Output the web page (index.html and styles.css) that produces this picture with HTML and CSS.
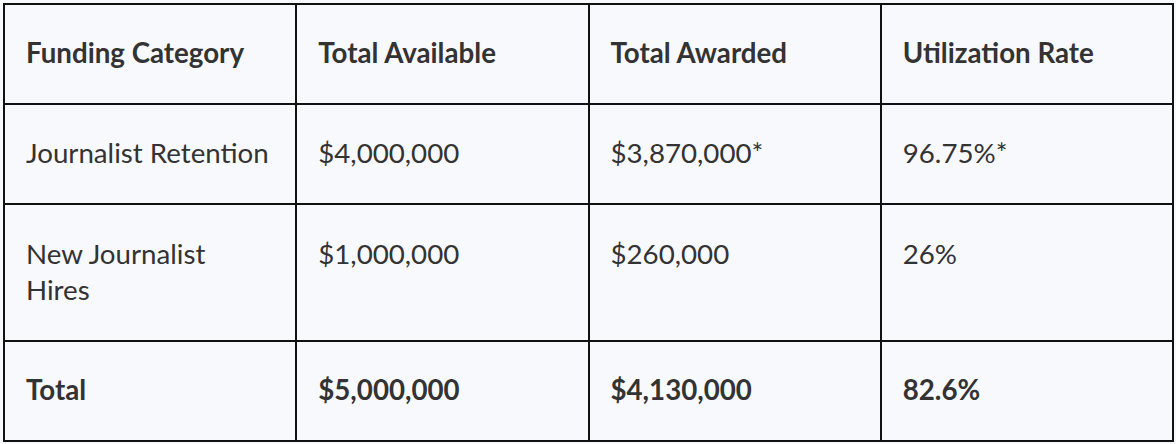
FILE: index.html
```html
<!DOCTYPE html>
<html>
<head>
<meta charset="utf-8">
<link rel="stylesheet" href="styles.css">
</head>
<body>
<div class="wrap">
<table class="funding">
<thead>
<tr><th>Funding Category</th><th>Total Available</th><th>Total Awarded</th><th>Utilization Rate</th></tr>
</thead>
<tbody>
<tr><td>Journalist Retention</td><td>$4,000,000</td><td>$3,870,000*</td><td>96.75%*</td></tr>
<tr class="tall"><td>New Journalist Hires</td><td>$1,000,000</td><td>$260,000</td><td>26%</td></tr>
<tr class="total"><td>Total</td><td>$5,000,000</td><td>$4,130,000</td><td>82.6%</td></tr>
</tbody>
</table>
</div>
</body>
</html>
```

FILE: styles.css
```css
html, body {
  margin: 0;
  padding: 0;
  background: #f8f9fd;
}
.wrap {
  padding: 3px 0 0 3px;
}
.funding {
  width: 1171px;
  border-collapse: collapse;
  table-layout: fixed;
  font-family: Lato, "Noto Sans", sans-serif;
  font-size: 27.7px;
  line-height: 36px;
  color: #333;
}
.funding th, .funding td {
  border: 2px solid #111;
  padding: 30px 22px 32px 21px;
  text-align: left;
  vertical-align: top;
}
.funding th {
  font-weight: 700;
}
.funding .tall td {
  padding-top: 31px;
  padding-bottom: 32px;
}
.funding .total td {
  font-weight: 700;
}
```
